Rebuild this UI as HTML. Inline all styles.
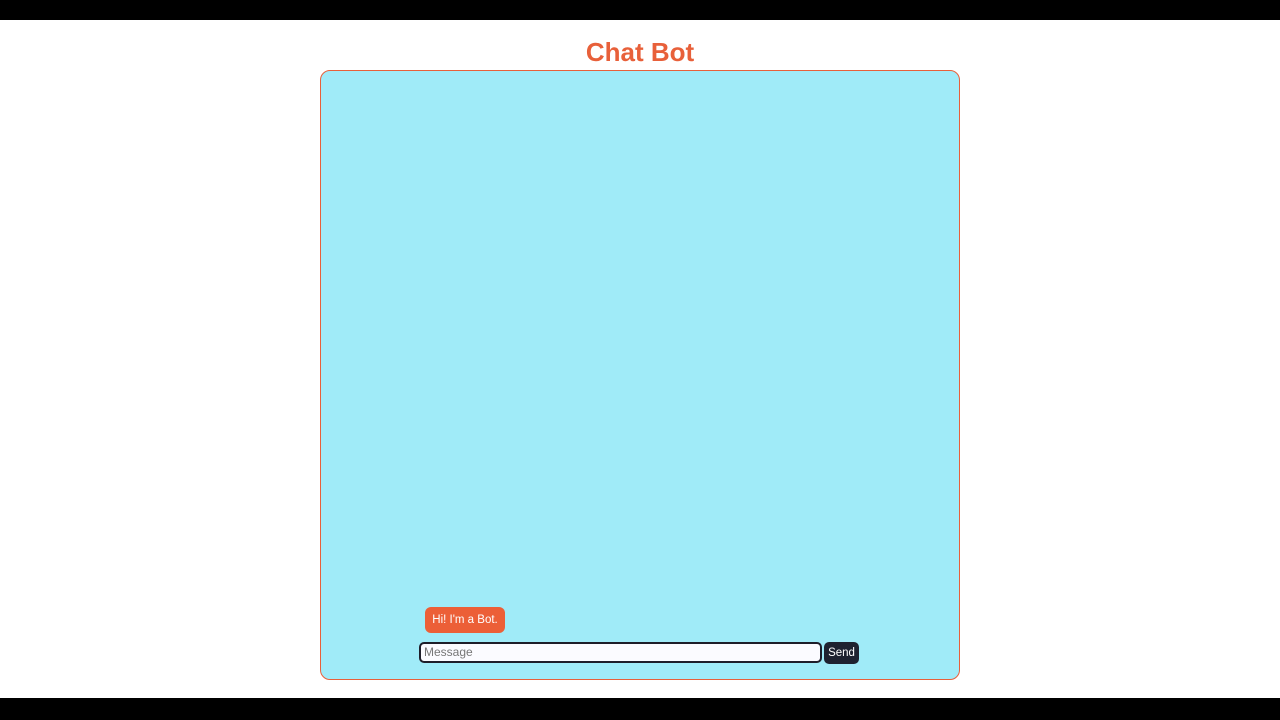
<!DOCTYPE html>
<html><head><style>
body{margin:0;width:1280px;height:720px;background:#fff;position:relative;overflow:hidden;font-family:"Liberation Sans",sans-serif}
.bar{position:absolute;left:0;width:1280px;background:#000}
h1{position:absolute;top:36px;left:0;width:1280px;margin:0;text-align:center;color:#e8603a;font-size:26px;line-height:32px;font-weight:bold;font-family:"Liberation Sans",sans-serif}
.box{position:absolute;left:320px;top:70px;width:638px;height:608px;border:1px solid #e8603a;border-radius:10px;background:#a0ebf8}
.msg{position:absolute;left:425px;top:607px;width:80px;height:26px;background:#ec5f37;border-radius:6px;color:#fff;font-size:11.5px;line-height:27px;text-align:center}
.inp{position:absolute;left:419px;top:642px;width:396px;height:17px;border:2px solid #1e1e2a;border-radius:5px;background:#fbfbff;font-size:12px;color:#777;line-height:17px;padding-left:3px;box-sizing:content-box}
.btn{position:absolute;left:824px;top:642px;width:35px;height:22px;background:#1e2230;border-radius:5px;color:#fff;font-size:11.5px;line-height:23px;text-align:center}
</style></head><body>
<div class="bar" style="top:0;height:20px"></div>
<div class="bar" style="top:698px;height:22px"></div>
<h1>Chat Bot</h1>
<div class="box"></div>
<div class="msg">Hi! I'm a Bot.</div>
<div class="inp">Message</div>
<div class="btn">Send</div>
</body></html>
